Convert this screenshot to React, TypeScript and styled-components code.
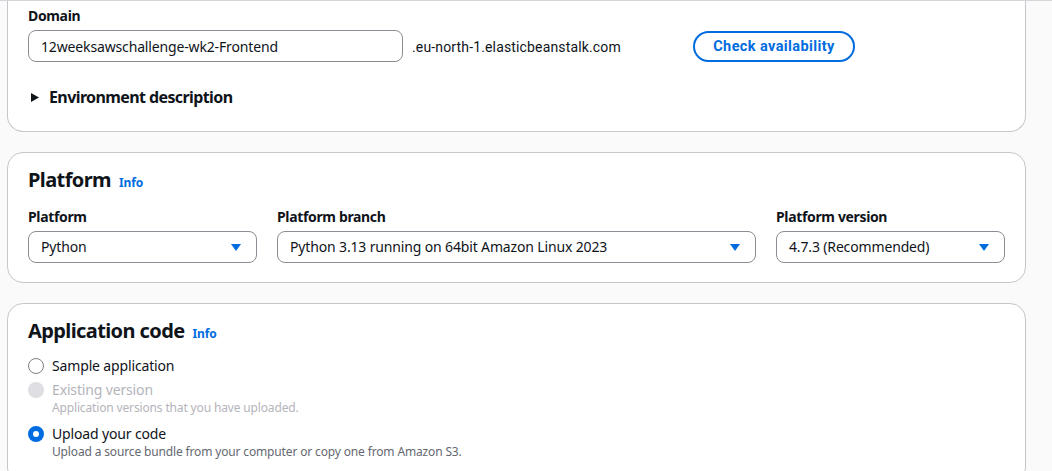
import React from "react";
import styled, { createGlobalStyle } from "styled-components";

const Global = createGlobalStyle`
  html, body { margin: 0; padding: 0; }
  body {
    background: #fafafa;
    font-family: "Noto Sans", "Open Sans", Arial, sans-serif;
    color: #0f141a;
    border-top: 1px solid #d5d5da;
    overflow: hidden;
  }
`;

const Page = styled.div`
  width: 1019px;
  margin-left: 7px;
  margin-top: -1px;
  display: flex;
  flex-direction: column;
  gap: 20px;
`;

const Card = styled.section<{ $clipped?: boolean }>`
  background: #ffffff;
  border: 1px solid #c6c6cd;
  border-radius: 16px;
  padding: 15px 20px 19px;
  ${(p) =>
    p.$clipped &&
    `
    border-top: none;
    border-top-left-radius: 0;
    border-top-right-radius: 0;
    padding-top: 6px;
    padding-bottom: 23px;
  `}
`;

const Heading = styled.h2`
  margin: 0;
  display: flex;
  align-items: baseline;
  gap: 8px;
  font-size: 20px;
  line-height: 24px;
  font-weight: 700;
  letter-spacing: -0.6px;
`;

const InfoLink = styled.a`
  font-size: 12px;
  font-weight: 700;
  letter-spacing: -0.1px;
  color: #006ce0;
  text-decoration: none;
`;

const Label = styled.div`
  font-size: 14px;
  line-height: 20px;
  font-weight: 700;
  letter-spacing: -0.35px;
  margin-bottom: 4px;
`;

const DomainRow = styled.div`
  display: flex;
  align-items: center;
`;

const TextInput = styled.div`
  box-sizing: border-box;
  width: 375px;
  height: 32px;
  border: 1px solid #8c8c94;
  border-radius: 8px;
  padding: 0 12px;
  display: flex;
  align-items: center;
  font-size: 14px;
  letter-spacing: -0.15px;
`;

const Suffix = styled.span`
  width: 290px;
  padding-left: 9px;
  box-sizing: border-box;
  font-family: Roboto, "Liberation Sans", sans-serif;
  font-size: 14px;
  line-height: 20px;
  letter-spacing: 0.15px;
  margin-top: 2px;
`;

const OutlineButton = styled.button`
  box-sizing: border-box;
  width: 162px;
  height: 31px;
  border: 2px solid #006ce0;
  border-radius: 20px;
  background: #ffffff;
  color: #006ce0;
  font-family: Roboto, "Liberation Sans", sans-serif;
  font-weight: 700;
  font-size: 14.5px;
  letter-spacing: 0.4px;
  padding: 0;
  cursor: pointer;
`;

const Expander = styled.div`
  margin-top: 24px;
  display: flex;
  align-items: center;
  gap: 10px;
  padding-left: 3px;
  font-size: 16px;
  line-height: 22px;
  font-weight: 700;
  letter-spacing: -0.6px;
`;

const FieldGrid = styled.div`
  margin-top: 12px;
  display: grid;
  grid-template-columns: 229fr 479fr 229fr;
  column-gap: 20px;
`;

const Select = styled.div`
  box-sizing: border-box;
  height: 32px;
  border: 1px solid #8c8c94;
  border-radius: 8px;
  padding: 0 15px 1px 12px;
  display: flex;
  align-items: center;
  justify-content: space-between;
  font-size: 14px;
  letter-spacing: -0.15px;
  svg { margin-top: 1px; }
`;

const RadioGroup = styled.div`
  margin-top: 10px;
  display: flex;
  flex-direction: column;
  gap: 4px;
`;

const RadioItem = styled.div`
  display: grid;
  grid-template-columns: 16px 1fr;
  column-gap: 8px;
  align-items: center;
`;

const RadioCircle = styled.span<{ $state: "off" | "on" | "disabled" }>`
  box-sizing: border-box;
  width: 16px;
  height: 16px;
  border-radius: 50%;
  ${(p) =>
    p.$state === "on"
      ? "border: 5px solid #006ce0; background: #ffffff;"
      : p.$state === "disabled"
      ? "background: #dedee3; border: none;"
      : "border: 1.5px solid #7d7d85; background: #ffffff;"}
`;

const RadioLabel = styled.span<{ $disabled?: boolean }>`
  font-size: 14px;
  line-height: 20px;
  letter-spacing: -0.15px;
  color: ${(p) => (p.$disabled ? "#b4b4bb" : "#0f141a")};
`;

const RadioDesc = styled.span<{ $disabled?: boolean }>`
  grid-column: 2;
  font-size: 12px;
  line-height: 16px;
  letter-spacing: -0.15px;
  padding-bottom: 4px;
  color: ${(p) => (p.$disabled ? "#b4b4bb" : "#656871")};
`;

const Caret = () => (
  <svg width="10" height="7" viewBox="0 0 10 7" aria-hidden>
    <path d="M0 0 H10 L5 7 Z" fill="#006ce0" />
  </svg>
);

const Triangle = () => (
  <svg width="8" height="9" viewBox="0 0 8 9" aria-hidden>
    <path d="M0 0 L8 4.5 L0 9 Z" fill="#0f141a" />
  </svg>
);

export default function App() {
  return (
    <>
      <Global />
      <Page>
        <Card $clipped>
          <Label>Domain</Label>
          <DomainRow>
            <TextInput>12weeksawschallenge-wk2-Frontend</TextInput>
            <Suffix>.eu-north-1.elasticbeanstalk.com</Suffix>
            <OutlineButton>Check availability</OutlineButton>
          </DomainRow>
          <Expander>
            <Triangle />
            Environment description
          </Expander>
        </Card>

        <Card>
          <Heading>
            Platform <InfoLink>Info</InfoLink>
          </Heading>
          <FieldGrid>
            <div>
              <Label>Platform</Label>
              <Select>
                Python <Caret />
              </Select>
            </div>
            <div>
              <Label>Platform branch</Label>
              <Select>
                Python 3.13 running on 64bit Amazon Linux 2023 <Caret />
              </Select>
            </div>
            <div>
              <Label>Platform version</Label>
              <Select>
                4.7.3 (Recommended) <Caret />
              </Select>
            </div>
          </FieldGrid>
        </Card>

        <Card>
          <Heading>
            Application code <InfoLink>Info</InfoLink>
          </Heading>
          <RadioGroup>
            <RadioItem>
              <RadioCircle $state="off" />
              <RadioLabel>Sample application</RadioLabel>
            </RadioItem>
            <RadioItem>
              <RadioCircle $state="disabled" />
              <RadioLabel $disabled>Existing version</RadioLabel>
              <RadioDesc $disabled>Application versions that you have uploaded.</RadioDesc>
            </RadioItem>
            <RadioItem>
              <RadioCircle $state="on" />
              <RadioLabel>Upload your code</RadioLabel>
              <RadioDesc>Upload a source bundle from your computer or copy one from Amazon S3.</RadioDesc>
            </RadioItem>
          </RadioGroup>
        </Card>
      </Page>
    </>
  );
}
